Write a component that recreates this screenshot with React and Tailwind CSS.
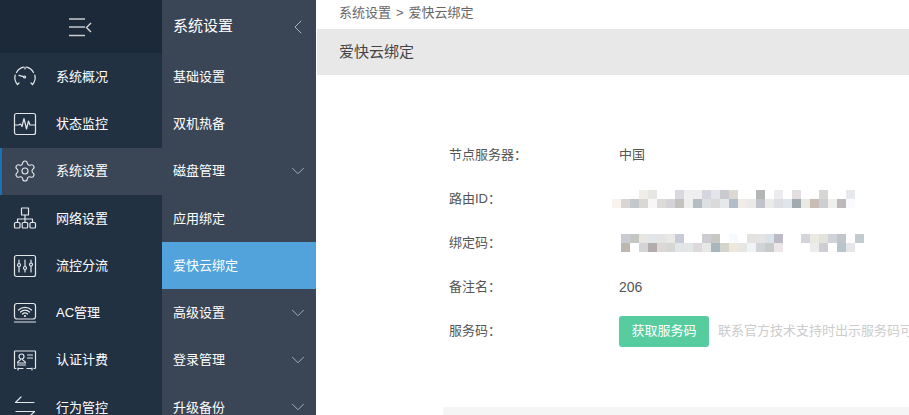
import { ChevronDown, ChevronLeft, Settings } from "lucide-react";

const FONT = "[font-family:'Liberation_Sans','Noto_Sans_CJK_SC',sans-serif]";

function Icon({ children }) {
  return (
    <svg width="24" height="24" viewBox="0 0 24 24" fill="none" stroke="#e4e7ea" strokeWidth="1.2" strokeLinecap="round" strokeLinejoin="round">
      {children}
    </svg>
  );
}

const GaugeIcon = () => (
  <Icon>
    <path d="M4.500 19.500A10.500 10.500 0 0 1 2.200 10M3.500 7.500A10.500 10.500 0 0 1 10.500 2.200M13.500 2.200A10.500 10.500 0 0 1 20.500 7.500M21.800 10A10.500 10.500 0 0 1 19.500 19.500" />
    <path d="M4.500 19.500l1.500-1.500M19.500 19.500L18 18M12 2v2" />
    <path d="M6 10.400l4.600 1.200" />
    <circle cx="11.6" cy="12" r="1" />
  </Icon>
);
const MonitorIcon = () => (
  <Icon>
    <rect x="1.5" y="1.5" width="21" height="21" rx="2" />
    <path d="M2 13h3.500l2-1 1.500 2.500 2-8 2.500 10.500 2-8 1.500 4h5" />
  </Icon>
);
const NetworkIcon = () => (
  <Icon>
    <rect x="8.5" y="2" width="7" height="7" />
    <path d="M12 9v4M4.500 16.500v-3.500h15v3.500M12 13v3.500" />
    <rect x="1.5" y="16.5" width="5.5" height="5.5" rx="1" />
    <rect x="9.2" y="16.5" width="5.5" height="5.5" rx="1" />
    <rect x="17" y="16.5" width="5.5" height="5.5" rx="1" />
  </Icon>
);
const SlidersIcon = () => (
  <Icon>
    <rect x="1.5" y="1.5" width="21" height="21" rx="2" />
    <path d="M6 6v3.500M6 12.500V18M12 6v6.500M12 15.500V18M18 6v3M18 12v6" />
    <circle cx="6" cy="11" r="1.5" />
    <circle cx="12" cy="14" r="1.5" />
    <circle cx="18" cy="10.5" r="1.5" />
  </Icon>
);
const WifiBoxIcon = () => (
  <Icon>
    <rect x="1.5" y="2.5" width="21" height="15.5" rx="2.5" />
    <path d="M1.500 21h21" />
    <path d="M5.500 9a9.500 9.500 0 0 1 13 0M7.500 11a6.500 6.500 0 0 1 9 0M9.500 13a3.500 3.500 0 0 1 5 0" />
    <circle cx="12" cy="15" r="0.5" />
  </Icon>
);
const IdCardIcon = () => (
  <Icon>
    <path d="M3 20.500H2a.5.5 0 0 1-.5-.5V3.500A.5.5 0 0 1 2 3h20a.5.5 0 0 1 .5.5V20a.5.5 0 0 1-.5.5h-1" />
    <path d="M6 20.500h4M14 20.500h4M5 22v-2M19 22v-2" />
    <circle cx="8.5" cy="8.5" r="2.5" />
    <path d="M7.500 11.500c0 1-3 1.200-3 3.500h8c0-2.300-3-2.500-3-3.500M4.500 17h8" />
    <path d="M14.500 7h5M14.500 10h5" />
  </Icon>
);
const ArrowsIcon = () => (
  <Icon>
    <path d="M8 2L2.500 7.500h18.500M16 22l5.500-5.500H3" />
  </Icon>
);

const PRIMARY = [
  { label: "系统概况", icon: GaugeIcon },
  { label: "状态监控", icon: MonitorIcon },
  { label: "系统设置", active: true },
  { label: "网络设置", icon: NetworkIcon },
  { label: "流控分流", icon: SlidersIcon },
  { label: "AC管理", icon: WifiBoxIcon },
  { label: "认证计费", icon: IdCardIcon },
  { label: "行为管控", icon: ArrowsIcon },
];

const SECONDARY = [
  { label: "基础设置" },
  { label: "双机热备" },
  { label: "磁盘管理", more: true },
  { label: "应用绑定" },
  { label: "爱快云绑定", active: true },
  { label: "高级设置", more: true },
  { label: "登录管理", more: true },
  { label: "升级备份", more: true },
];

// blurred values: [cell index, colour], each cell 9px square
const ID_TOP = [[3,"#f0ece8"],[4,"#e6e6e2"],[7,"#d8d8e0"],[8,"#efefef"],[9,"#eeeeee"],[10,"#d4d5dd"],[11,"#e4e5ea"],[12,"#c8cad0"],[13,"#dcd8d4"],[16,"#b4b6b4"],[18,"#ececf0"],[20,"#e2dee2"],[23,"#d6d6d4"],[26,"#e6e8ee"]];
const ID_BOTTOM = ["#f8f3ee","#d9d5d2","#c3c6ca","#d9d8d4","#f7f7f7","#dcdbd8","#d3d3d8","#c4c2bf","#eeeeec","#b5bcc2","#dde0e3","#dcdad8","#e5e9ea","#b2bdca","#f0ece8","#eaeae8","#c0c4ca","#eaeae6","#dedfe4","#e2e4ec","#a0aab0","#ebe8e4","#c8bcb4","#cdced2","#efefec","#bdb8bc","#fafaff"].map((c, i) => [i, c]);
const CODE_TOP = [[1,"#c8cbd2"],[2,"#c4c6c4"],[3,"#e8e6e2"],[4,"#e0e6ea"],[5,"#e4e4e2"],[6,"#e8e8e6"],[7,"#c8cad8"],[10,"#cccdd0"],[11,"#c8c8c2"],[13,"#f6faff"],[15,"#e4e2e0"],[16,"#e4e4e4"],[17,"#dae2ea"],[18,"#bcbac4"],[21,"#d4d4dc"],[22,"#ece8e2"],[23,"#e2e4dc"],[24,"#d0d2da"],[25,"#c0c6ca"],[27,"#c2ccd0"]];
const CODE_BOTTOM = [[1,"#bcb8b0"],[3,"#d4d4d6"],[4,"#b4acac"],[5,"#dcd8d6"],[6,"#d6d6d4"],[7,"#e2e6e8"],[8,"#e2e6e6"],[9,"#dcd8dc"],[10,"#e6e8e6"],[11,"#a8b6c0"],[12,"#d4d4ce"],[13,"#f0e6da"],[14,"#e6e6e4"],[15,"#f0f2f6"],[16,"#d0d4d8"],[17,"#c8ccc8"],[18,"#ece6e8"],[22,"#ececec"],[23,"#ccced4"],[25,"#b8c6cc"],[26,"#e4e6ea"]];

function Mosaic({ top, bottom }) {
  return (
    <svg width="252" height="18" className="block" shapeRendering="crispEdges">
      {top.map(([i, c]) => <rect key={i} x={i * 9} y="0" width="9" height="9" fill={c} />)}
      {bottom.map(([i, c]) => <rect key={i} x={i * 9} y="9" width="9" height="9" fill={c} />)}
    </svg>
  );
}

function Row({ label, children }) {
  return (
    <div className="flex h-[44px] items-center">
      <div className="w-[170px] shrink-0 text-[13px] text-[#555]">{label}</div>
      <div className="flex items-center whitespace-nowrap text-[13px] text-[#555]">{children}</div>
    </div>
  );
}

export default function App() {
  return (
    <div className={`flex h-[415px] w-[909px] overflow-hidden bg-white ${FONT}`}>
      <aside className="w-[162px] shrink-0 bg-[#223142]">
        <div className="flex h-[53px] items-center justify-center bg-[#1c2938] pr-[2px]">
          <svg width="24" height="20" viewBox="0 0 24 20" fill="none" strokeWidth="1.4">
            <path d="M1 2h16M1 18.500h16" stroke="#c9ccd0" />
            <path d="M1 10h16" stroke="#9aa0a6" strokeWidth="2" />
            <path d="M23 6l-4.500 4.500 4.500 4.500" stroke="#d5d8db" />
          </svg>
        </div>
        {PRIMARY.map((item) => {
          const ItemIcon = item.icon;
          return (
            <div
              key={item.label}
              className={`flex h-[47.25px] items-center border-l-[2px] pl-[11px] ${item.active ? "border-[#1a73ba] bg-[#3a4656]" : "border-transparent"}`}
            >
              <div className="w-[43px] shrink-0">
                {item.active ? <Settings size={24} strokeWidth={1.1} color="#e4e7ea" /> : <ItemIcon />}
              </div>
              <span className="text-[13px] text-white">{item.label}</span>
            </div>
          );
        })}
      </aside>

      <aside className="w-[154px] shrink-0 bg-[#3a4656]">
        <div className="flex h-[53px] items-center justify-between pl-[11px] pr-[6px]">
          <span className="text-[15px] text-white">系统设置</span>
          <ChevronLeft size={24} strokeWidth={1} color="#aeb4bb" />
        </div>
        {SECONDARY.map((item) => (
          <div
            key={item.label}
            className={`flex h-[47.25px] items-center justify-between pl-[11px] pr-[7px] ${item.active ? "bg-[#52a2dc]" : ""}`}
          >
            <span className="text-[13px] text-white">{item.label}</span>
            {item.more && <ChevronDown size={22} strokeWidth={1} color="#aeb4bb" />}
          </div>
        ))}
      </aside>

      <main className="flex min-w-0 flex-1 flex-col">
        <div className="flex h-[29px] shrink-0 items-center pb-[3px] pl-[23px] text-[13px] text-[#666]">
          系统设置<span className="mx-[5px]">&gt;</span>爱快云绑定
        </div>
        <div className="ml-px flex h-[46px] shrink-0 items-center bg-[#e8e8e8] pl-[22px] text-[15px] text-[#444]">爱快云绑定</div>
        <div className="shrink-0 pl-[133px] pt-[58px]">
          <Row label="节点服务器：">中国</Row>
          <Row label="路由ID：">
            <div className="-ml-[7px]"><Mosaic top={ID_TOP} bottom={ID_BOTTOM} /></div>
          </Row>
          <Row label="绑定码：">
            <div className="-ml-[7px]"><Mosaic top={CODE_TOP} bottom={CODE_BOTTOM} /></div>
          </Row>
          <Row label="备注名："><span className="text-[14px]">206</span></Row>
          <Row label="服务码：">
            <button className="flex h-[31px] w-[90px] items-center justify-center rounded-[3px] bg-[#57cc9f] text-[13px] text-white">获取服务码</button>
            <span className="ml-[9px] text-[13px] text-[#ccc]">联系官方技术支持时出示服务码可</span>
          </Row>
        </div>
        <div className="ml-[127px] mt-[54px] h-[40px] shrink-0 bg-[#f5f5f5]" />
      </main>
    </div>
  );
}
